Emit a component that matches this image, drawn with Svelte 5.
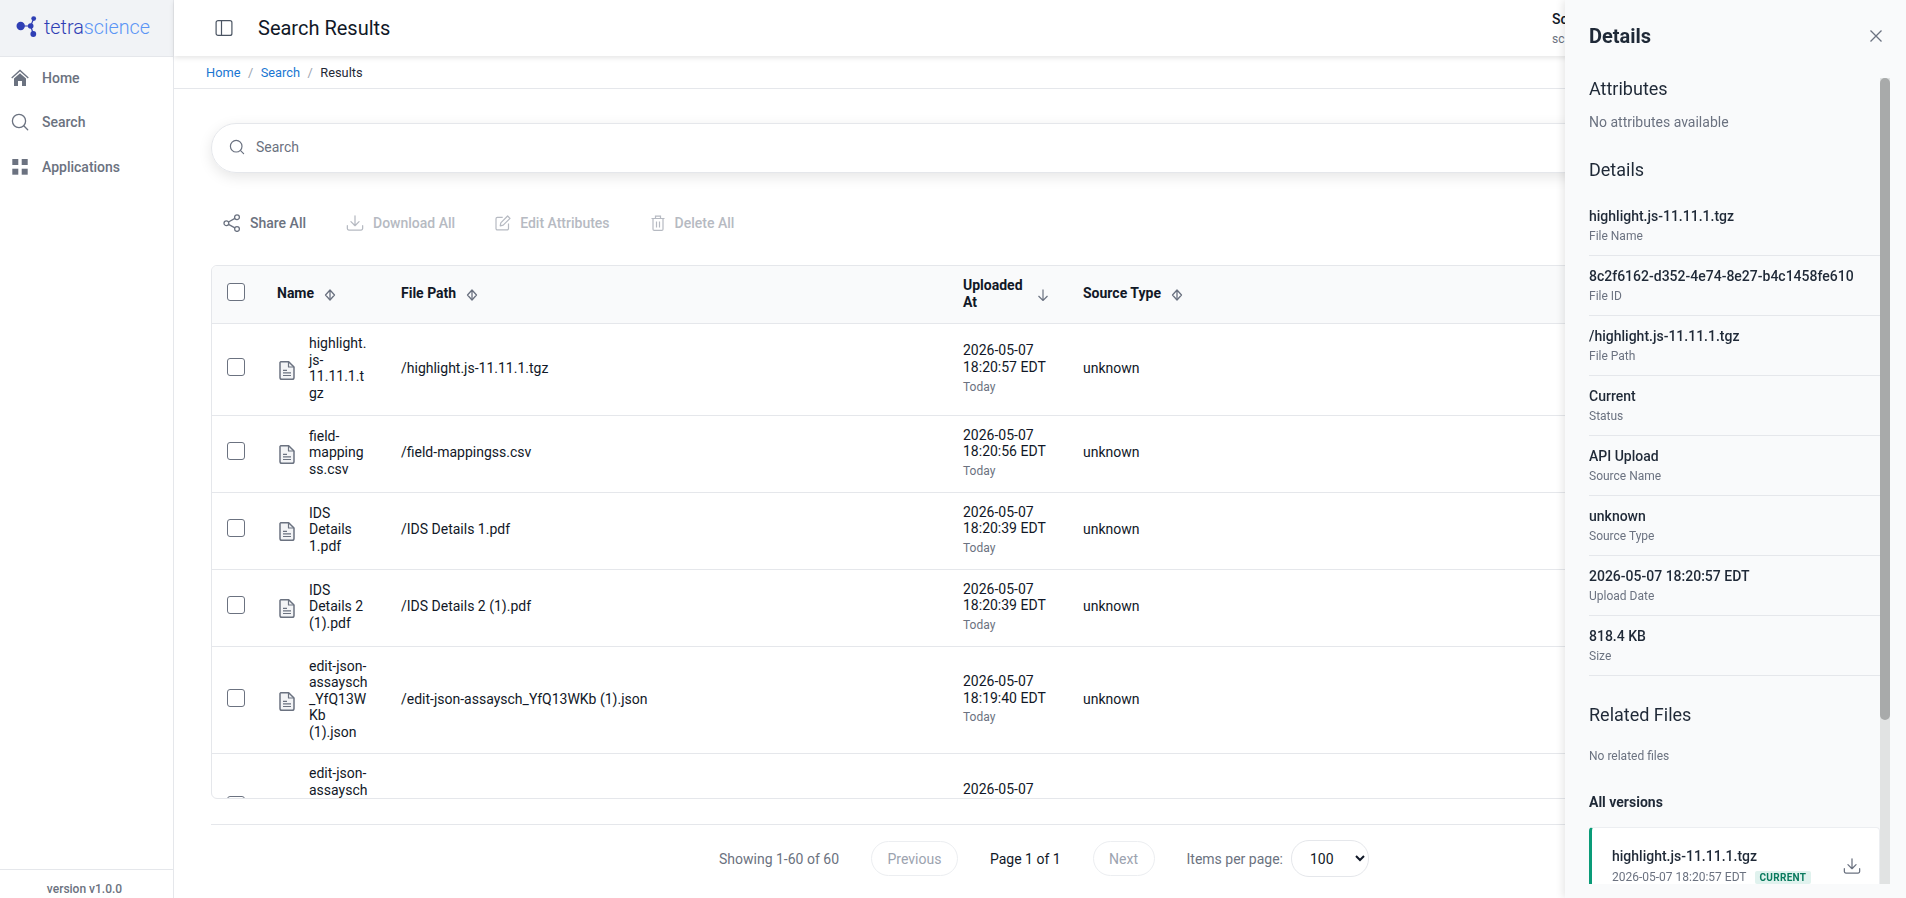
<script lang="ts">
	// Search results page with the file details drawer open over it.
	interface Row {
		name: string;
		path: string;
		date: string;
		time: string;
	}

	const rows: Row[] = [
		{ name: 'highlight.js-11.11.1.tgz', path: '/highlight.js-11.11.1.tgz', date: '2026-05-07', time: '18:20:57 EDT' },
		{ name: 'field-mappingss.csv', path: '/field-mappingss.csv', date: '2026-05-07', time: '18:20:56 EDT' },
		{ name: 'IDS Details 1.pdf', path: '/IDS Details 1.pdf', date: '2026-05-07', time: '18:20:39 EDT' },
		{ name: 'IDS Details 2 (1).pdf', path: '/IDS Details 2 (1).pdf', date: '2026-05-07', time: '18:20:39 EDT' },
		{ name: 'edit-json-assaysch_YfQ13WKb (1).json', path: '/edit-json-assaysch_YfQ13WKb (1).json', date: '2026-05-07', time: '18:19:40 EDT' },
		{ name: 'edit-json-assaysch_YfQ13WKb (2).json', path: '/edit-json-assaysch_YfQ13WKb (2).json', date: '2026-05-07', time: '18:19:38 EDT' }
	];

	const details = [
		{ value: 'highlight.js-11.11.1.tgz', label: 'File Name' },
		{ value: '8c2f6162-d352-4e74-8e27-b4c1458fe610', label: 'File ID' },
		{ value: '/highlight.js-11.11.1.tgz', label: 'File Path' },
		{ value: 'Current', label: 'Status' },
		{ value: 'API Upload', label: 'Source Name' },
		{ value: 'unknown', label: 'Source Type' },
		{ value: '2026-05-07 18:20:57 EDT', label: 'Upload Date' },
		{ value: '818.4 KB', label: 'Size' }
	];
</script>

{#snippet sortIcon()}
	<svg class="sort" viewBox="0 0 12 12" aria-hidden="true">
		<path d="M6 1 10.5 6 6 11 1.5 6Z" fill="none" stroke="#6b7280" stroke-width="1.3" stroke-linejoin="round" />
		<path d="M6 1v10" stroke="#6b7280" stroke-width="1.3" />
	</svg>
{/snippet}

{#snippet downloadIcon(size: number)}
	<svg width={size} height={size} viewBox="0 0 20 20" fill="none" stroke="currentColor" stroke-width="1.4" stroke-linecap="round" stroke-linejoin="round" aria-hidden="true">
		<path d="M10 2v11M5.5 8.5 10 13l4.5-4.5" />
		<path d="M1.5 13v3.2c0 .9.7 1.6 1.6 1.6h13.8c.9 0 1.6-.7 1.6-1.6V13" />
	</svg>
{/snippet}

<div class="app">
	<aside class="sidebar">
		<div class="logo">
			<svg width="22" height="22" viewBox="0 0 22 22" aria-hidden="true">
				<path d="M4.7 10h10l3-7.5M14.7 10l2.6 8" stroke="#2f3fb5" stroke-width="1.2" fill="none" />
				<circle cx="4.7" cy="10" r="4.2" fill="#2f3fb5" />
				<circle cx="14.7" cy="10" r="2.8" fill="#2f3fb5" />
				<circle cx="17.7" cy="2.6" r="2.4" fill="#2f3fb5" />
				<circle cx="17.3" cy="18" r="2.9" fill="#2f3fb5" />
			</svg>
			<span class="logo__text"><span class="logo__dark">tetra</span><span class="logo__light">science</span></span>
		</div>
		<nav class="nav">
			<div class="nav__item">
				<svg width="18" height="18" viewBox="0 0 18 18" aria-hidden="true">
					<path d="M.7 9 9 1.4 17.3 9" fill="none" stroke="#6b7280" stroke-width="1.3" />
					<path d="M3 9.6 9 4.2l6 5.4V17h-4v-5H7v5H3Z" fill="#6b7280" />
				</svg>
				<span>Home</span>
			</div>
			<div class="nav__item">
				<svg width="18" height="18" viewBox="0 0 18 18" fill="none" stroke="#6b7280" stroke-width="1.3" stroke-linecap="round" aria-hidden="true">
					<circle cx="8" cy="8" r="6.6" />
					<path d="m13 13 3.7 3.7" />
				</svg>
				<span>Search</span>
			</div>
			<div class="nav__item">
				<svg width="18" height="18" viewBox="0 0 18 18" fill="#6b7280" aria-hidden="true">
					<rect x="1.3" y="1" width="6" height="6" />
					<rect x="10.7" y="1" width="6" height="6" />
					<rect x="1.3" y="10.7" width="6" height="6" />
					<rect x="10.7" y="10.7" width="6" height="6" />
				</svg>
				<span>Applications</span>
			</div>
		</nav>
		<div class="version">version v1.0.0</div>
	</aside>

	<main class="main">
		<header class="topbar">
			<svg width="18" height="18" viewBox="0 0 18 18" fill="none" stroke="#4b5563" stroke-width="1.2" aria-hidden="true">
				<rect x="1.1" y="1.6" width="15.8" height="14.8" rx="2" />
				<path d="M6.5 1.6v14.8" />
			</svg>
			<h1 class="topbar__title">Search Results</h1>
			<div class="user">
				<span class="user__name">So</span>
				<span class="user__mail">sc</span>
			</div>
		</header>

		<div class="crumbs">
			<span class="crumbs__link">Home</span>
			<span class="crumbs__sep">/</span>
			<span class="crumbs__link">Search</span>
			<span class="crumbs__sep">/</span>
			<span class="crumbs__here">Results</span>
		</div>

		<div class="content">
			<div class="search">
				<svg width="16" height="16" viewBox="0 0 16 16" fill="none" stroke="#6b7280" stroke-width="1.2" stroke-linecap="round" aria-hidden="true">
					<circle cx="7.2" cy="7.2" r="5.8" />
					<path d="m11.6 11.6 3 3" />
				</svg>
				<span>Search</span>
			</div>

			<div class="actions">
				<div class="action">
					<svg width="18" height="18" viewBox="0 0 18 18" fill="none" stroke="currentColor" stroke-width="1.3" aria-hidden="true">
						<circle cx="3.4" cy="9.2" r="2.4" />
						<circle cx="14" cy="3.2" r="2.4" />
						<circle cx="14" cy="15" r="2.4" />
						<path d="M5.5 8 11.9 4.4M5.5 10.4l6.4 3.5" />
					</svg>
					<span>Share All</span>
				</div>
				<div class="action action--off">
					{@render downloadIcon(18)}
					<span>Download All</span>
				</div>
				<div class="action action--off">
					<svg width="16" height="16" viewBox="0 0 16 16" fill="none" stroke="currentColor" stroke-width="1.2" stroke-linejoin="round" aria-hidden="true">
						<path d="M13.5 8.5v5a1.4 1.4 0 0 1-1.4 1.4H2.4A1.4 1.4 0 0 1 1 13.5V3.8a1.4 1.4 0 0 1 1.4-1.4h5.3" />
						<path d="M12.6 1 15 3.4 8.2 10.2l-3 .6.6-3Z" />
					</svg>
					<span>Edit Attributes</span>
				</div>
				<div class="action action--off">
					<svg width="16" height="16" viewBox="0 0 16 16" fill="none" stroke="currentColor" stroke-width="1.2" aria-hidden="true">
						<path d="M1.5 3.5h13M5.5 3.5V1.2h5v2.3M3 3.5v10.7c0 .7.5 1.2 1.2 1.2h7.6c.7 0 1.2-.5 1.2-1.2V3.5M6.5 6.5v6M9.5 6.5v6" />
					</svg>
					<span>Delete All</span>
				</div>
			</div>

			<div class="tablewrap">
				<table class="table">
					<colgroup>
						<col style="width: 49px" />
						<col style="width: 124px" />
						<col style="width: 562px" />
						<col style="width: 120px" />
						<col />
					</colgroup>
					<thead>
						<tr>
							<th><input class="check" type="checkbox" aria-label="Select all" /></th>
							<th><div class="th">Name {@render sortIcon()}</div></th>
							<th><div class="th">File Path {@render sortIcon()}</div></th>
							<th>
								<div class="th th--tight">
									<span>Uploaded At</span>
									<svg class="sort" viewBox="0 0 12 12" fill="none" stroke="#6b7280" stroke-width="1.2" aria-hidden="true">
										<path d="M6 .5v11M1.5 7 6 11.5 10.5 7" />
									</svg>
								</div>
							</th>
							<th><div class="th">Source Type {@render sortIcon()}</div></th>
						</tr>
					</thead>
					<tbody>
						{#each rows as row (row.path)}
							<tr>
								<td><input class="check" type="checkbox" aria-label="Select row" /></td>
								<td>
									<div class="file">
										<svg class="file__icon" width="16" height="19" viewBox="0 0 16 19" fill="none" stroke="#6b7280" stroke-width="1.5" stroke-linejoin="round" aria-hidden="true">
											<path d="M1.7.8h8L15 6v10.4c0 1-.8 1.8-1.8 1.8H2.8c-1 0-1.8-.8-1.8-1.8V1.5Z" fill="#f3f4f6" />
											<path d="M9.5 1v5H15M4 9.3h4M4 11.8h8M4 14.5h8" stroke-width="1.2" />
										</svg>
										<span class="file__name">{row.name}</span>
									</div>
								</td>
								<td>{row.path}</td>
								<td>
									<div class="when">{row.date} {row.time}</div>
									<div class="today">Today</div>
								</td>
								<td>unknown</td>
							</tr>
						{/each}
					</tbody>
				</table>
			</div>

			<footer class="pager">
				<span class="pager__muted">Showing 1-60 of 60</span>
				<button class="pager__btn" disabled>Previous</button>
				<span>Page 1 of 1</span>
				<button class="pager__btn" disabled>Next</button>
				<label class="pager__size">
					<span class="pager__muted">Items per page:</span>
					<select class="pager__select">
						<option>100</option>
					</select>
				</label>
			</footer>
		</div>
	</main>

	<aside class="drawer">
		<div class="drawer__head">
			<h2 class="drawer__title">Details</h2>
			<svg width="14" height="14" viewBox="0 0 14 14" stroke="#6b7280" stroke-width="1.3" aria-hidden="true">
				<path d="m1.5 1.5 11 11M12.5 1.5l-11 11" />
			</svg>
		</div>
		<div class="drawer__body">
			<div class="drawer__scroll">
				<h3 class="drawer__h3">Attributes</h3>
				<p class="drawer__none">No attributes available</p>

				<h3 class="drawer__h3 drawer__h3--gap">Details</h3>
				<dl class="facts">
					{#each details as d (d.label)}
						<div class="fact">
							<dt class="fact__value">{d.value}</dt>
							<dd class="fact__label">{d.label}</dd>
						</div>
					{/each}
				</dl>

				<h3 class="drawer__h3 drawer__h3--related">Related Files</h3>
				<p class="drawer__none drawer__none--small">No related files</p>

				<h4 class="drawer__h4">All versions</h4>
				<div class="version-card">
					<div>
						<div class="version-card__name">highlight.js-11.11.1.tgz</div>
						<div class="version-card__meta">
							<span>2026-05-07 18:20:57 EDT</span>
							<span class="badge">CURRENT</span>
						</div>
					</div>
					<span class="version-card__dl">{@render downloadIcon(18)}</span>
				</div>
			</div>
			<div class="scrollbar" aria-hidden="true">
				<div class="scrollbar__thumb"></div>
			</div>
		</div>
	</aside>
</div>

<style>
	:global(body) {
		margin: 0;
		background: #fff;
		font-family: Roboto, sans-serif;
		font-size: 14px;
		color: #111827;
	}

	.app {
		display: grid;
		grid-template-columns: 174px 1fr;
		height: 898px;
		overflow: hidden;
	}

	.sidebar {
		display: flex;
		flex-direction: column;
		border-right: 1px solid #e5e7eb;
		min-height: 0;
	}

	.logo {
		display: flex;
		align-items: center;
		gap: 6px;
		padding: 0 0 2px 16px;
		box-sizing: border-box;
		height: 57px;
		background: #f1f3f6;
		border-bottom: 1px solid #e5e7eb;
	}

	.logo__text {
		font-size: 19.8px;
		font-weight: 300;
	}

	.logo__dark {
		color: #2f3fb5;
	}

	.logo__light {
		color: #5b95f5;
	}

	.nav {
		flex: 1;
		display: flex;
		flex-direction: column;
		gap: 26px;
		padding: 12px 0 0 11px;
	}

	.nav__item {
		display: flex;
		align-items: center;
		gap: 13px;
		height: 18px;
		font-weight: 500;
		color: #6b7280;
	}

	.nav__item:last-child {
		margin-top: 1px;
	}

	.version {
		padding: 12px 4px 2px 0;
		height: 14px;
		border-top: 1px solid #e5e7eb;
		text-align: center;
		font-size: 12px;
		font-weight: 500;
		color: #6b7280;
	}

	.main {
		display: flex;
		flex-direction: column;
		min-width: 0;
	}

	.topbar {
		display: flex;
		align-items: center;
		height: 56px;
		padding-left: 41px;
		box-shadow: 0 2px 5px rgba(0, 0, 0, 0.1);
		position: relative;
	}

	.topbar__title {
		margin: 0 0 0 25px;
		font-size: 20px;
		font-weight: 400;
	}

	.user {
		margin-left: auto;
		width: 354px;
		display: flex;
		flex-direction: column;
		gap: 5px;
	}

	.user__name {
		font-weight: 500;
	}

	.user__mail {
		font-size: 12px;
		color: #6b7280;
	}

	.crumbs {
		display: flex;
		align-items: center;
		gap: 7.5px;
		height: 32px;
		padding-left: 32px;
		font-size: 12.8px;
		border-bottom: 1px solid #e5e7eb;
	}

	.crumbs__link {
		color: #1976d2;
	}

	.crumbs__sep {
		color: #9ca3af;
	}

	.crumbs__here {
		color: #1f2937;
	}

	.content {
		flex: 1;
		display: flex;
		flex-direction: column;
		min-height: 0;
		padding: 34px 29px 0 37px;
	}

	.search {
		display: flex;
		align-items: center;
		gap: 11px;
		height: 50px;
		padding: 0 0 2px 17px;
		box-sizing: border-box;
		border: 1px solid #e5e7eb;
		border-radius: 25px;
		box-shadow: 0 4px 14px rgba(0, 0, 0, 0.1);
		color: #6b7280;
	}

	.actions {
		display: flex;
		align-items: center;
		gap: 40px;
		height: 36px;
		margin: 32px 0 24px;
		padding-left: 12px;
	}

	.action {
		display: flex;
		align-items: center;
		gap: 9px;
		font-weight: 500;
		color: #6b7280;
	}

	.action--off {
		color: #b6bac2;
	}

	.tablewrap {
		flex: none;
		height: 534px;
		box-sizing: border-box;
		overflow: hidden;
		border: 1px solid #e5e7eb;
		border-radius: 6px;
	}

	.table {
		width: 100%;
		table-layout: fixed;
		border-collapse: collapse;
		line-height: 16.6px;
	}

	.table th {
		padding: 11px 16px 13px;
		background: #f9fafb;
		border-bottom: 1px solid #e5e7eb;
		text-align: left;
		font-weight: 700;
	}

	.table td {
		padding: 11px 16px 13px;
		border-bottom: 1px solid #e5e7eb;
	}

	.table th:first-child,
	.table td:first-child {
		padding-left: 15px;
		padding-right: 0;
	}

	.th {
		display: flex;
		align-items: center;
		gap: 10px;
	}

	.th--tight {
		gap: 9px;
		margin-right: 2px;
	}

	.sort {
		flex: none;
		width: 12px;
		height: 12px;
		margin-top: 2px;
	}

	.check {
		display: block;
		appearance: none;
		box-sizing: border-box;
		width: 18px;
		height: 18px;
		margin: 0 0 3px;
		background: #fff;
		border: 1px solid #6b7280;
		border-radius: 3px;
	}

	.file {
		display: flex;
		align-items: center;
		gap: 14px;
		padding-left: 2px;
	}

	.file__icon {
		flex: none;
		margin-top: 4px;
	}

	.file__name {
		width: 59px;
		overflow-wrap: anywhere;
	}

	.today {
		margin-top: 5px;
		font-size: 12px;
		line-height: 13.8px;
		color: #6b7280;
	}

	.pager {
		display: flex;
		justify-content: center;
		align-items: center;
		gap: 32px;
		margin-top: 25px;
		padding-top: 15px;
		border-top: 1px solid #e5e7eb;
	}

	.pager__muted {
		color: #6b7280;
	}

	.pager__btn {
		height: 35px;
		padding: 0 15.5px;
		background: #fff;
		border: 1px solid #eceef1;
		border-radius: 18px;
		font: inherit;
		color: #9ca3af;
	}

	.pager__size {
		display: flex;
		align-items: center;
		gap: 8px;
	}

	.pager__select {
		width: 78px;
		height: 37px;
		padding-left: 14px;
		background: #fff;
		border: 1px solid #e5e7eb;
		border-radius: 18px;
		font: inherit;
		color: #111827;
	}

	.drawer {
		position: fixed;
		top: 0;
		right: 0;
		bottom: 0;
		width: 341px;
		display: flex;
		flex-direction: column;
		box-sizing: border-box;
		padding: 0 16px 14px 24px;
		background: #f9fafb;
		box-shadow: -2px 0 8px rgba(0, 0, 0, 0.1);
	}

	.drawer__head {
		flex: none;
		display: flex;
		justify-content: space-between;
		align-items: center;
		height: 72px;
		margin-bottom: 6px;
		padding-right: 7px;
	}

	.drawer__title {
		margin: 0;
		font-size: 20px;
		font-weight: 700;
		color: #1f2937;
	}

	.drawer__body {
		flex: 1;
		min-height: 0;
		display: flex;
	}

	.drawer__scroll {
		flex: 1;
		min-width: 0;
		overflow: hidden;
	}

	.scrollbar {
		flex: none;
		width: 10px;
		background: #e1e3e3;
	}

	.scrollbar__thumb {
		height: 642px;
		background: #a8aaaa;
		border-radius: 5px;
	}

	.drawer__h3 {
		margin: 0;
		font-size: 18px;
		font-weight: 400;
		line-height: 21px;
		color: #1f2937;
	}

	.drawer__h3--gap {
		margin-top: 29px;
	}

	.drawer__h3--related {
		margin-top: 28px;
	}

	.drawer__none {
		margin: 15px 0 0;
		line-height: 16px;
		color: #6b7280;
	}

	.drawer__none--small {
		margin-top: 23px;
		font-size: 12px;
	}

	.drawer__h4 {
		margin: 30px 0 0;
		font-size: 14px;
		font-weight: 700;
		line-height: 16px;
		color: #1f2937;
	}

	.facts {
		margin: 16px 0 0;
	}

	.fact {
		padding: 12px 0;
		border-bottom: 1px solid #e5e7eb;
	}

	.fact__value {
		font-weight: 500;
		line-height: 16px;
		color: #1f2937;
	}

	.fact__label {
		margin: 5px 0 0;
		font-size: 12px;
		line-height: 14px;
		color: #6b7280;
	}

	.version-card {
		display: flex;
		justify-content: space-between;
		align-items: center;
		margin-top: 17px;
		padding: 20px 18px 16px 20px;
		background: #fff;
		border: 1px solid #eceef1;
		border-left: 3px solid #0a9b78;
		border-radius: 4px;
	}

	.version-card__name {
		font-weight: 500;
		line-height: 16px;
		color: #1f2937;
	}

	.version-card__meta {
		display: flex;
		align-items: center;
		gap: 8px;
		margin-top: 6px;
		font-size: 12px;
		color: #6b7280;
	}

	.version-card__dl {
		display: flex;
		color: #6b7280;
	}

	.badge {
		padding: 1px 5px;
		background: #e0f2ee;
		border-radius: 2px;
		font-size: 10px;
		font-weight: 700;
		letter-spacing: 0.3px;
		color: #0a7a5e;
	}
</style>
